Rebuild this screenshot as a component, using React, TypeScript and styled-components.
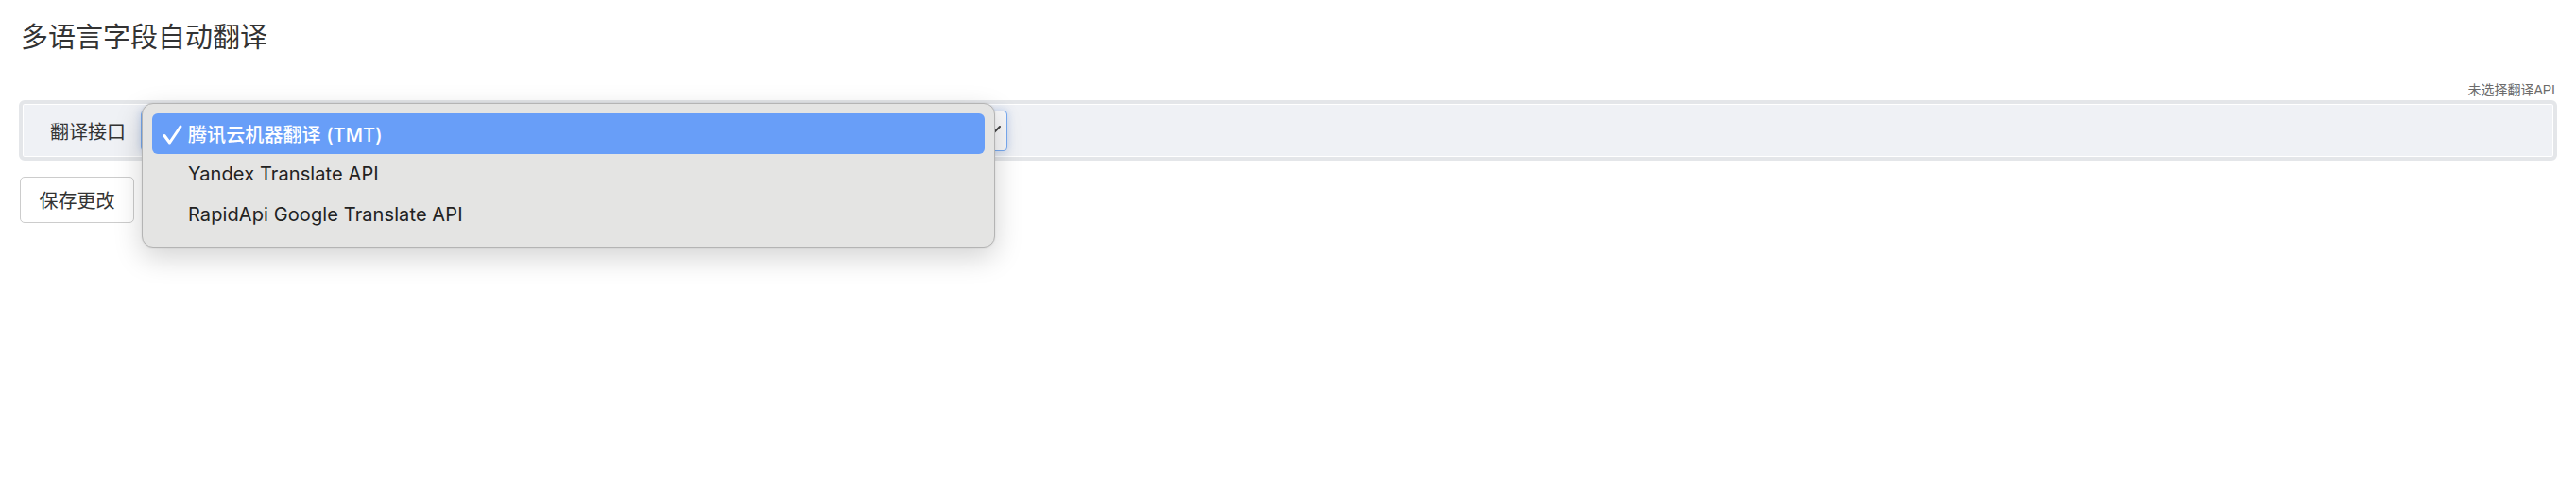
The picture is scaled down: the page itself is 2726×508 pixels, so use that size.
import React from 'react';
import styled, { createGlobalStyle } from 'styled-components';

const GlobalStyle = createGlobalStyle`
  body {
    margin: 0;
    background: #ffffff;
    font-family: "Liberation Sans", "Noto Sans CJK SC", sans-serif;
    color: #333333;
  }
`;

const options = ['腾讯云机器翻译 (TMT)', 'Yandex Translate API', 'RapidApi Google Translate API'];

function CheckMark() {
  return (
    <CheckIcon viewBox="0 0 24 24" width="24" height="24">
      <path d="M3 12.5 L8.5 20 L20 3" fill="none" stroke="#ffffff" strokeWidth="3" strokeLinecap="round" strokeLinejoin="round" />
    </CheckIcon>
  );
}

function App() {
  const selected = 0;

  return (
    <Page>
      <GlobalStyle />
      <Title>多语言字段自动翻译</Title>
      <HelpRow>未选择翻译API</HelpRow>
      <FieldPanel>
        <FieldLabel>翻译接口</FieldLabel>
        <SelectWrap>
          <SelectBox>
            <Chevron viewBox="0 0 16 10" width="16" height="10">
              <path d="M1 1 L8 8 L15 1" fill="none" stroke="#444" strokeWidth="2" strokeLinecap="round" />
            </Chevron>
          </SelectBox>
          <Popup>
            {options.map((opt, i) => (
              <OptionRow key={opt} active={i === selected}>
                {i === selected && <CheckMark />}
                {opt}
              </OptionRow>
            ))}
          </Popup>
        </SelectWrap>
      </FieldPanel>
      <SaveButton>保存更改</SaveButton>
    </Page>
  );
}

export default App;

const Page = styled.div`
  box-sizing: border-box;
  min-height: 100vh;
  padding: 20px 20px 0 20px;
`;

const Title = styled.h1`
  margin: 0;
  font-size: 29px;
  font-weight: 400;
  line-height: 40px;
  color: #333333;
  padding-left: 2px;
`;

const HelpRow = styled.div`
  display: flex;
  justify-content: flex-end;
  margin-top: 26px;
  margin-bottom: 2px;
  padding-right: 2px;
  font-size: 14px;
  line-height: 18px;
  color: #6b6b6b;
`;

const FieldPanel = styled.div`
  display: flex;
  align-items: center;
  height: 56px;
  border: 4px solid #e4e6e9;
  border-radius: 6px;
  background: #eff1f5;
  box-shadow: inset 0 0 0 1px #ffffff;
`;

const FieldLabel = styled.label`
  padding-left: 29px;
  font-size: 20px;
  color: #333333;
  white-space: nowrap;
`;

const SelectWrap = styled.div`
  position: relative;
  margin-left: 16px;
`;

const SelectBox = styled.div`
  display: flex;
  align-items: center;
  justify-content: flex-end;
  box-sizing: border-box;
  width: 917px;
  height: 43px;
  padding-right: 6px;
  border: 1px solid #78aaf0;
  border-radius: 4px;
  background: #f8f8f9;
  box-shadow: 0 0 8px rgba(90, 140, 230, 0.3);
`;

const Chevron = styled.svg`
  display: block;
`;

const Popup = styled.div`
  position: absolute;
  z-index: 10;
  left: 1px;
  top: -8px;
  box-sizing: border-box;
  width: 903px;
  padding: 10px 10px 12px 10px;
  border: 1px solid #b4b4b4;
  border-radius: 12px;
  background: #e4e4e3;
  box-shadow: 0 10px 30px rgba(0, 0, 0, 0.18), 0 0 2px rgba(0, 0, 0, 0.1);
  font-family: Inter, "Noto Sans CJK SC", sans-serif;
`;

const OptionRow = styled.div<{ active: boolean }>`
  position: relative;
  display: flex;
  align-items: center;
  height: 43px;
  padding-left: 38px;
  border-radius: 6px;
  font-size: 20px;
  letter-spacing: 0.1px;
  font-weight: ${p => (p.active ? 500 : 400)};
  color: ${p => (p.active ? '#ffffff' : '#222222')};
  background: ${p => (p.active ? '#689ef8' : 'transparent')};
`;

const CheckIcon = styled.svg`
  position: absolute;
  left: 10px;
  top: 11px;
`;

const SaveButton = styled.button`
  display: block;
  box-sizing: border-box;
  margin-top: 17px;
  margin-left: 1px;
  width: 121px;
  height: 49px;
  padding: 0;
  border: 1px solid #cccccc;
  border-radius: 5px;
  background: #ffffff;
  font-family: "Liberation Sans", "Noto Sans CJK SC", sans-serif;
  font-size: 20px;
  color: #333333;
`;
